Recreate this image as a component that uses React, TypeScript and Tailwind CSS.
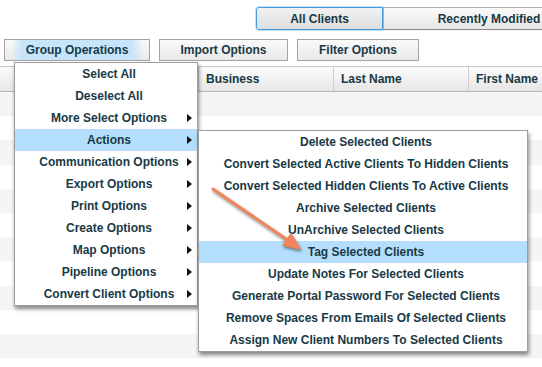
import { ReactNode } from "react"

const mainItems = [
  { label: "Select All" },
  { label: "Deselect All" },
  { label: "More Select Options", sub: true },
  { label: "Actions", sub: true, active: true },
  { label: "Communication Options", sub: true },
  { label: "Export Options", sub: true },
  { label: "Print Options", sub: true },
  { label: "Create Options", sub: true },
  { label: "Map Options", sub: true },
  { label: "Pipeline Options", sub: true },
  { label: "Convert Client Options", sub: true },
]

const actionItems = [
  "Delete Selected Clients",
  "Convert Selected Active Clients To Hidden Clients",
  "Convert Selected Hidden Clients To Active Clients",
  "Archive Selected Clients",
  "UnArchive Selected Clients",
  "Tag Selected Clients",
  "Update Notes For Selected Clients",
  "Generate Portal Password For Selected Clients",
  "Remove Spaces From Emails Of Selected Clients",
  "Assign New Client Numbers To Selected Clients",
]

function ToolButton({ children, width, glow }: { children: ReactNode; width: string; glow?: boolean }) {
  return (
    <div
      className={`${width} h-[22px] shrink-0 border border-[#a3a3a3] bg-gradient-to-b from-[#fafafa] to-[#e9e9e9] flex items-center justify-center`}
    >
      <div
        className={`w-full h-full flex items-center justify-center ${
          glow ? "bg-[linear-gradient(90deg,rgba(198,229,250,0)_4%,#c6e5fa_12%,#c6e5fa_88%,rgba(198,229,250,0)_96%)]" : ""
        }`}
      >
        {children}
      </div>
    </div>
  )
}

function Caret() {
  return (
    <svg className="absolute right-[5px] top-[7px]" width="5" height="8" viewBox="0 0 5 8">
      <path d="M0 0 L5 4 L0 8 Z" fill="#111" />
    </svg>
  )
}

export default function App() {
  return (
    <div className="relative w-[542px] h-[367px] overflow-hidden bg-white font-['Liberation_Sans',Arial,sans-serif] text-[12px] font-bold text-[#183945]">
      {/* view tabs */}
      <div className="flex pl-[256px] pt-[7px]">
        <div className="w-[127px] h-[23px] shrink-0 rounded-l-[3px] border border-[#3f9be4] shadow-[0_0_0_1px_rgba(90,170,235,0.35)] bg-gradient-to-b from-[#f2f2f2] to-[#dedede] flex items-center justify-center">
          All Clients
        </div>
        <div className="w-[212px] h-[23px] shrink-0 border border-[#b0b0b0] border-b-[#888] bg-gradient-to-b from-[#fbfbfb] to-[#e6e6e6] flex items-center justify-center">
          Recently Modified
        </div>
      </div>

      {/* toolbar */}
      <div className="flex gap-[9px] pl-[4px] mt-[9px]">
        <ToolButton width="w-[146px]" glow>
          Group Operations
        </ToolButton>
        <ToolButton width="w-[129px]">Import Options</ToolButton>
        <ToolButton width="w-[122px]">Filter Options</ToolButton>
      </div>

      {/* table header */}
      <div className="mt-[5px] h-[26px] flex border-t border-[#c8c8c8] border-b border-b-[#b5b5b5] bg-gradient-to-b from-[#fcfcfc] to-[#e6e6e6]">
        <div className="w-[198px] shrink-0" />
        <div className="w-[135px] shrink-0 border-l border-[#cfcfcf] pl-[7px] flex items-center">Business</div>
        <div className="w-[135px] shrink-0 border-l border-[#cfcfcf] pl-[7px] flex items-center">Last Name</div>
        <div className="flex-1 border-l border-[#cfcfcf] pl-[7px] flex items-center whitespace-nowrap">First Name</div>
      </div>

      {/* table rows */}
      <div className="flex flex-col">
        {Array.from({ length: 12 }).map((_, i) => (
          <div key={i} className={`h-[24.2px] shrink-0 ${i % 2 === 0 ? "bg-[#f5f5f5]" : "bg-white"}`} />
        ))}
      </div>

      {/* group operations menu */}
      <div className="absolute left-[14px] top-[62px] w-[184px] bg-white border border-[#9d9d9d] shadow-[1px_3px_4px_rgba(0,0,0,0.45)] flex flex-col">
        {mainItems.map((item) => (
          <div
            key={item.label}
            className={`relative h-[22px] pl-[10px] pr-[4px] flex items-center justify-center whitespace-nowrap ${
              item.active ? "bg-[#b4dffc]" : ""
            }`}
          >
            {item.label}
            {item.sub && <Caret />}
          </div>
        ))}
      </div>

      {/* actions submenu */}
      <div className="absolute left-[198px] top-[130px] w-[330px] bg-white border border-[#9d9d9d] shadow-[1px_3px_4px_rgba(0,0,0,0.45)] flex flex-col">
        {actionItems.map((label) => (
          <div
            key={label}
            className={`h-[22px] pl-[6px] flex items-center justify-center whitespace-nowrap ${
              label === "Tag Selected Clients" ? "bg-[#b4dffc]" : ""
            }`}
          >
            {label}
          </div>
        ))}
      </div>

      {/* annotation arrow */}
      <svg
        className="absolute left-0 top-0 pointer-events-none drop-shadow-[1px_2px_1.5px_rgba(0,0,0,0.45)]"
        width="542"
        height="367"
        viewBox="0 0 542 367"
      >
        <line x1="213" y1="189" x2="289" y2="241" stroke="#f0845c" strokeWidth="3" strokeLinecap="round" />
        <path d="M300 249 L283 245 L291 234 Z" fill="#f0845c" stroke="#f0845c" strokeWidth="1.5" strokeLinejoin="round" />
      </svg>
    </div>
  )
}
